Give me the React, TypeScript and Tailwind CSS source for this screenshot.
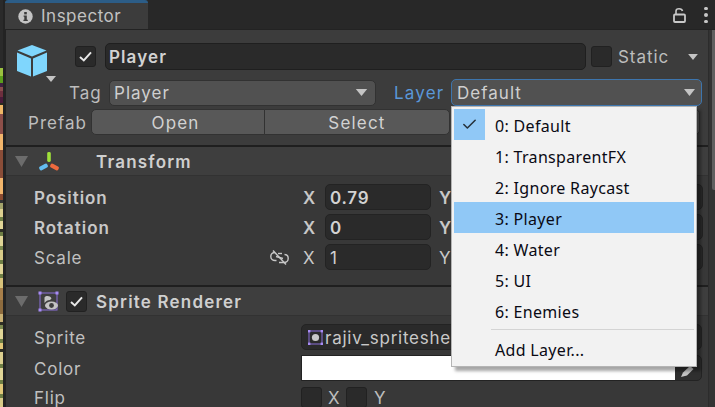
import { ReactNode } from "react";
import { Check } from "lucide-react";

const stripe = [
  ["#2a2a2a", 68], ["#9bc23f", 8], ["#5b9e1c", 7], ["#3f2140", 4], ["#8a4d4d", 4], ["#6e2f3e", 6], ["#4a1b3a", 6], ["#2b2b1f", 2],
  ["#f0b766", 9], ["#8d4f49", 20], ["#f2b56b", 16], ["#8a4d38", 28], ["#f2b56b", 16], ["#8a4a30", 6], ["#333333", 3],
  ["#a3a36b", 6], ["#dccf8f", 8], ["#6f7f45", 4], ["#e0d596", 8], ["#2f2f24", 3], ["#6f7f45", 4], ["#e0d596", 10], ["#7d8a50", 4], ["#d8cb88", 10],
  ["#6f7f45", 4], ["#e0d596", 10], ["#6f7f45", 4], ["#d8c27a", 10], ["#a87f4a", 12], ["#8d6b3e", 14], ["#c9b073", 8], ["#2f2f24", 3], ["#7d8a50", 4],
  ["#e0d596", 10], ["#6f7f45", 4], ["#e2c878", 6], ["#2f2f24", 3], ["#dccf8f", 12], ["#6f7f45", 4], ["#e0d596", 12], ["#6f7f45", 4], ["#e0c878", 10], ["#6f7f45", 4], ["#d8cb88", 20],
] as const;

const layers = ["0: Default", "1: TransparentFX", "2: Ignore Raycast", "3: Player", "4: Water", "5: UI", "6: Enemies"];

function Caret({ className }: { className: string }) {
  return (
    <svg width="13" height="8" viewBox="0 0 13 8" className={className}>
      <path d="M0 0H13L6.5 8Z" fill="currentColor" />
    </svg>
  );
}

function CheckBox({ on }: { on?: boolean }) {
  return (
    <div className="w-[21px] h-[21px] shrink-0 rounded-[3px] bg-[#2a2a2a] border border-[#212121] flex items-center justify-center">
      {on && (
        <svg width="13" height="11" viewBox="0 0 13 11">
          <path d="M1 6L4.8 9.4L12 1.4" fill="none" stroke="#e8e8e8" strokeWidth="2" />
        </svg>
      )}
    </div>
  );
}

function Triangle() {
  return (
    <svg width="13" height="11" viewBox="0 0 13 11" className="shrink-0">
      <path d="M0 0H13L6.5 11Z" fill="#6c6c6c" />
    </svg>
  );
}

function NumberField({ label, value, bold }: { label?: string; value?: string; bold?: boolean }) {
  return (
    <div className="flex items-center w-[128px] shrink-0 mr-[8px]">
      <span className={`w-[22px] pt-[2px] text-[#c8c8c8] ${bold ? "font-semibold" : ""}`}>{label}</span>
      <div className={`w-[106px] h-[26px] rounded-[5px] bg-[#2a2a2a] border border-[#232323] pl-[4px] pt-[2px] flex items-center text-[#d2d2d2] ${bold ? "font-semibold" : ""}`}>
        {value}
      </div>
    </div>
  );
}

function VectorRow({ label, bold, value, extra }: { label: string; bold?: boolean; value: string; extra?: ReactNode }) {
  return (
    <div className="flex items-center h-[26px] mb-[4px]">
      <span className={`w-[264px] pl-[28px] pt-[2px] shrink-0 ${bold ? "font-semibold text-[#c8c8c8] tracking-[0.055em]" : "text-[#c0c0c0]"}`}>{label}</span>
      <div className="w-[33px] shrink-0">{extra}</div>
      <NumberField label="X" value={value} bold={bold} />
      <NumberField label="Y" bold={bold} />
      <NumberField />
    </div>
  );
}

function SectionHeader({ icon, check, title }: { icon: ReactNode; check?: boolean; title: string }) {
  return (
    <div className="h-[31px] shrink-0 border-t-2 border-[#1f1f1f] bg-[#3e3e3e] border-b border-b-[#323232] flex items-center pl-[9px]">
      <Triangle />
      <div className="w-[21px] h-[21px] ml-[10px] shrink-0 flex items-center justify-center">{icon}</div>
      <div className="w-[28px] shrink-0 pl-[7px]">{check && <CheckBox on />}</div>
      <span className="ml-[9px] pt-[2px] font-semibold tracking-[0.07em] text-[#cfcfcf]">{title}</span>
    </div>
  );
}

export default function App() {
  return (
    <div className="relative flex w-[715px] h-[407px] overflow-hidden bg-[#282828] text-[17px] leading-none tracking-[0.045em] text-[#c4c4c4] font-['Inter',sans-serif]">
      <div className="w-[3px] shrink-0 flex flex-col">
        {stripe.map(([color, h], i) => (
          <div key={i} className="shrink-0" style={{ backgroundColor: color, height: h }} />
        ))}
      </div>
      <div className="w-[3px] shrink-0 bg-[#232323]" />

      <div className="flex-1 min-w-0 flex flex-col">
        {/* tab bar */}
        <div className="h-[30px] shrink-0 flex items-stretch border-b border-[#232323]">
          <div className="-ml-px w-[143px] h-[29px] bg-[#3c3c3c] border-t-[3px] border-[#2c5d87] rounded-t-[3px] flex items-center pl-[13px]">
            <svg width="15" height="15" viewBox="0 0 15 15">
              <circle cx="7.5" cy="7.5" r="7.2" fill="#c4c4c4" />
              <rect x="6.2" y="3" width="2.6" height="2.4" fill="#3c3c3c" />
              <path d="M5.6 6.5H8.8V10.7H9.8V12H5.4V10.7H6.3V7.8H5.6Z" fill="#3c3c3c" />
            </svg>
            <span className="ml-[8px] tracking-[0.03em] text-[#c2c2c2]">Inspector</span>
          </div>
          <div className="flex-1 flex items-center justify-end">
            <svg width="13" height="16" viewBox="0 0 13 16" className="mr-[18px] mt-[1px]">
              <path d="M3 7V4C3 1 9 1 9.5 4" fill="none" stroke="#c8c8c8" strokeWidth="1.6" />
              <rect x="1" y="7.5" width="11" height="7.5" rx="1" fill="none" stroke="#c8c8c8" strokeWidth="1.8" />
            </svg>
            <div className="flex flex-col gap-[3px] mr-[7px] mt-[1px]">
              <div className="w-[4px] h-[3.5px] rounded-full bg-[#c8c8c8]" />
              <div className="w-[4px] h-[3.5px] rounded-full bg-[#c8c8c8]" />
              <div className="w-[4px] h-[3.5px] rounded-full bg-[#c8c8c8]" />
            </div>
          </div>
        </div>

        <div className="flex-1 min-h-0 flex">
          <div className="flex-1 min-w-0 flex flex-col overflow-hidden">
            {/* game object header */}
            <div className="h-[115px] shrink-0 bg-[#3c3c3c] pt-[13px]">
              <div className="flex">
                <div className="w-[58px] shrink-0 pl-[11px] pt-[2px]">
                  <svg width="30" height="32" viewBox="0 0 30 32">
                    <path d="M15 0L29.5 5.5L15 11.5L0.5 5.5Z" fill="#7fd6fd" />
                    <path d="M0 7.5L14 13.5V31.5L0 26Z" fill="#7fd6fd" />
                    <path d="M30 7.5L16 13.5V31.5L30 26Z" fill="#7fd6fd" />
                  </svg>
                  <svg width="10" height="6" viewBox="0 0 10 6" className="ml-[29px] -mt-px">
                    <path d="M0 0H10L5 6Z" fill="#c4c4c4" />
                  </svg>
                </div>
                <div className="flex-1 min-w-0">
                  <div className="flex items-center h-[27px]">
                    <div className="ml-[11px]"><CheckBox on /></div>
                    <div className="ml-[9px] w-[481px] h-[27px] rounded-[5px] bg-[#2a2a2a] border border-[#1f1f1f] pl-[3px] pt-[2px] flex items-center font-semibold tracking-[0.065em] text-[#d2d2d2]">
                      Player
                    </div>
                    <div className="ml-[5px]"><CheckBox /></div>
                    <span className="ml-[6px] pt-[2px] tracking-[0.055em] text-[#bdbdbd]">Static</span>
                    <Caret className="ml-[19px] text-[#c4c4c4] w-[10px] h-[6px]" />
                  </div>
                  <div className="flex items-center h-[27px] mt-[9px]">
                    <span className="ml-[5px] pt-[2px] w-[40px] tracking-[0.06em] text-[#bdbdbd]">Tag</span>
                    <div className="w-[267px] h-[26px] rounded-[5px] bg-[#515151] border border-[#323232] pl-[4px] pr-[7px] flex items-center justify-between text-[#cfcfcf]">
                      <span className="pt-[2px] tracking-[0.06em]">Player</span>
                      <Caret className="w-[13px] h-[7px] text-[#c4c4c4]" />
                    </div>
                    <span className="ml-[18px] pt-[2px] w-[57px] tracking-[0.07em] text-[#5a97d8]">Layer</span>
                    <div className="w-[251px] h-[27px] rounded-[5px] bg-[#515151] border border-[#3d75ad] pl-[5px] pr-[6px] flex items-center justify-between text-[#cfcfcf]">
                      <span className="pt-[2px] tracking-[0.06em]">Default</span>
                      <Caret className="w-[11px] h-[7px] text-[#c4c4c4]" />
                    </div>
                  </div>
                </div>
              </div>
              <div className="flex items-center h-[26px] mt-[3px]">
                <span className="ml-[22px] pt-[2px] w-[63px] tracking-[0.06em] text-[#bdbdbd]">Prefab</span>
                <div className="w-[174px] h-[26px] pt-[2px] pr-[5px] rounded-l-[5px] bg-[#585858] border border-[#323232] flex items-center justify-center tracking-[0.07em] text-[#d2d2d2]">Open</div>
                <div className="w-[186px] -ml-px h-[26px] pt-[2px] bg-[#585858] border border-[#323232] rounded-r-[5px] flex items-center justify-center tracking-[0.07em] text-[#d2d2d2]">Select</div>
                <div className="w-[249px] ml-[1px] h-[26px] bg-[#585858] border border-[#323232] rounded-[5px]" />
              </div>
            </div>

            {/* transform */}
            <SectionHeader
              title="Transform"
              icon={
                <svg width="20" height="19" viewBox="0 0 20 19">
                  <rect x="8.2" y="0" width="3.6" height="10" rx="1.4" fill="#9fe03a" />
                  <rect x="0" y="13" width="9" height="4" rx="1.6" fill="#63bdf0" transform="rotate(-28 4.5 15)" />
                  <rect x="11" y="13" width="9" height="4" rx="1.6" fill="#ee6a3e" transform="rotate(28 15.5 15)" />
                </svg>
              }
            />
            <div className="h-[109px] shrink-0 bg-[#383838] pt-[8px]">
              <VectorRow label="Position" bold value="0.79" />
              <VectorRow label="Rotation" bold value="0" />
              <VectorRow
                label="Scale"
                value="1"
                extra={
                  <svg width="19" height="15" viewBox="0 0 19 15" fill="none" stroke="#c8c8c8" strokeWidth="1.4">
                    <path d="M5 2.5C2.5 2.5 0.8 4 0.8 6.5C0.8 9 2.8 10.5 5 10.5H6.5" />
                    <path d="M8 3.5H12" />
                    <path d="M14.5 4.5C16.8 4.5 18.2 6 18.2 8.5C18.2 11 16.2 12.5 14 12.5H9" />
                    <path d="M6 6.5L13 8.5" />
                    <path d="M3 0.5L16 14.5" />
                  </svg>
                }
              />
            </div>

            {/* sprite renderer */}
            <SectionHeader
              title="Sprite Renderer"
              check
              icon={
                <svg width="21" height="21" viewBox="0 0 21 21">
                  <rect x="2" y="2" width="17" height="17" fill="none" stroke="#8a6fd8" strokeWidth="1" />
                  <rect x="0.5" y="0.5" width="3" height="3" fill="#a88cf5" />
                  <rect x="17.5" y="0.5" width="3" height="3" fill="#a88cf5" />
                  <rect x="0.5" y="17.5" width="3" height="3" fill="#a88cf5" />
                  <path d="M6.5 12V6.5C8 4.5 12 4.5 13.5 7.5L12 9C9.5 9 8 10 6.5 12Z" fill="#c4c4c4" />
                  <ellipse cx="13.5" cy="14.5" rx="6.5" ry="4" fill="#c4c4c4" />
                  <circle cx="13.5" cy="14.5" r="2.4" fill="#3e3e3e" />
                </svg>
              }
            />
            <div className="flex-1 bg-[#383838] pt-[8px]">
              <div className="flex items-center h-[26px]">
                <span className="w-[295px] pl-[28px] pt-[2px] shrink-0 text-[#c0c0c0]">Sprite</span>
                <div className="w-[401px] h-[26px] rounded-[5px] bg-[#2a2a2a] border border-[#232323] pl-[6px] flex items-center overflow-hidden whitespace-nowrap text-[#c8c8c8]">
                  <svg width="15" height="15" viewBox="0 0 15 15" className="shrink-0">
                    <rect x="1" y="1" width="13" height="13" fill="none" stroke="#8a6fd8" strokeWidth="1" />
                    <rect x="0" y="0" width="2.4" height="2.4" fill="#a88cf5" />
                    <rect x="12.6" y="0" width="2.4" height="2.4" fill="#a88cf5" />
                    <rect x="0" y="12.6" width="2.4" height="2.4" fill="#a88cf5" />
                    <rect x="12.6" y="12.6" width="2.4" height="2.4" fill="#a88cf5" />
                    <circle cx="7.5" cy="7.5" r="3.6" fill="#c8c8c8" />
                  </svg>
                  <span className="ml-[2px] pt-[2px]">rajiv_spriteshe</span>
                </div>
              </div>
              <div className="flex items-center h-[26px] mt-[5px]">
                <span className="w-[295px] pl-[28px] pt-[2px] shrink-0 text-[#c0c0c0]">Color</span>
                <div className="w-[401px] h-[26px] flex rounded-r-[5px] border border-[#232323] overflow-hidden bg-[#2f2f2f]">
                  <div className="w-[373px] bg-white" />
                  <div className="flex-1 flex items-end justify-center pb-[3px]">
                    <svg width="14" height="12" viewBox="0 0 14 12">
                      <path d="M0 12L2 7.5L9 1L12.5 4L6 10.5Z" fill="#c4c4c4" />
                    </svg>
                  </div>
                </div>
              </div>
              <div className="flex items-center h-[21px] mt-[6px]">
                <span className="w-[295px] pl-[28px] pt-[2px] shrink-0 text-[#c0c0c0]">Flip</span>
                <CheckBox />
                <span className="ml-[6px] pt-[2px] w-[18px] text-[#bdbdbd]">X</span>
                <CheckBox />
                <span className="ml-[7px] pt-[2px] text-[#bdbdbd]">Y</span>
              </div>
            </div>
          </div>

          {/* scrollbar */}
          <div className="w-[7px] shrink-0 flex bg-[#333333] border-l border-[#2c2c2c]">
            <div className="ml-[3px] w-[3px] h-[160px] bg-[#5f5f5f] rounded-bl-[2px]" />
          </div>
        </div>
      </div>

      {/* layer dropdown */}
      <div className="absolute left-[451px] top-[106px] w-[246px] h-[261px] bg-[#f2f2f2] border border-[#b4b4b4] shadow-[4px_4px_3px_rgba(0,0,0,0.35)] px-[2px] pt-[2px] text-[16px] tracking-[0.02em] text-[#0a0a14] font-['Noto_Sans',sans-serif]">
        {layers.map((name, i) => (
          <div key={name} className={`h-[31px] flex items-center ${i === 3 ? "bg-[#90c8f6]" : ""}`}>
            <div className={`w-[31px] h-[31px] shrink-0 flex items-center justify-center ${i === 0 ? "bg-[#90c8f6]" : ""}`}>
              {i === 0 && <Check size={17} strokeWidth={2.2} color="#26323c" />}
            </div>
            <span className="ml-[10px] pt-[2px]">{name}</span>
          </div>
        ))}
        <div className="ml-[37px] mt-[3px] h-px bg-[#d4d4d4]" />
        <div className="h-[31px] mt-[4px] pl-[41px] flex items-center">Add Layer...</div>
      </div>
    </div>
  );
}
